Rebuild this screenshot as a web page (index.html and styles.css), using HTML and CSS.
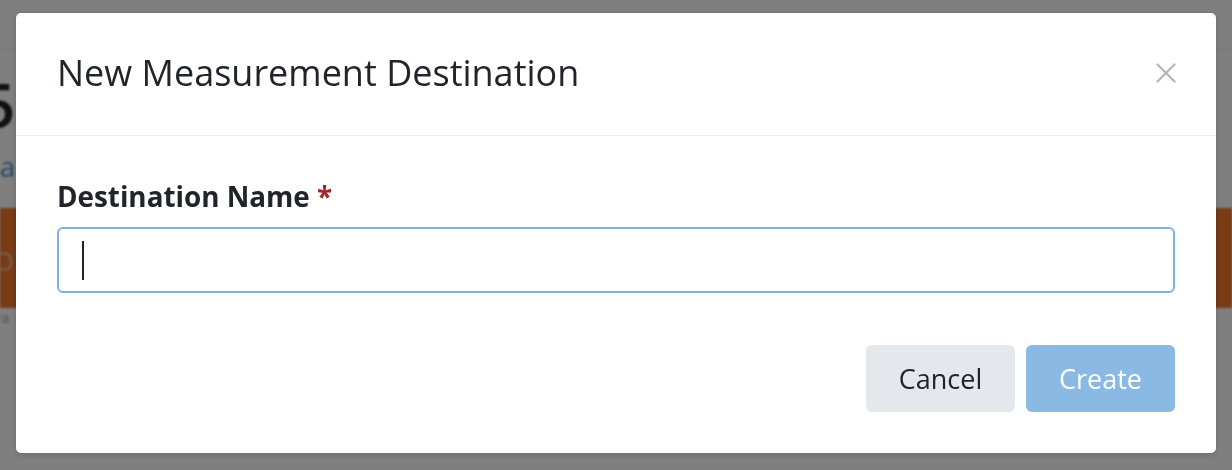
FILE: index.html
```html
<!DOCTYPE html>
<html lang="en">
<head>
<meta charset="utf-8">
<title>New Measurement Destination</title>
<link rel="stylesheet" href="styles.css">
</head>
<body>
<div class="page">
  <div class="nav"></div>
  <div class="content">
    <div class="big">5</div>
    <div class="link">ea</div>
  </div>
  <div class="band"><span class="band-text">o</span></div>
  <div class="small">ra</div>
</div>
<div class="overlay">
  <div class="modal">
    <div class="modal-header">
      <h5 class="modal-title">New Measurement Destination</h5>
      <button class="close" type="button" aria-label="Close">
        <svg width="20" height="20" viewBox="0 0 20 20"><path d="M1.5 1.5 L18.5 18.5 M18.5 1.5 L1.5 18.5" stroke="#b2b8bd" stroke-width="2.3" stroke-linecap="round" fill="none"/></svg>
      </button>
    </div>
    <div class="modal-body">
      <label class="label">Destination Name <span class="req">*</span></label>
      <div class="field">
        <div class="input"><span class="caret"></span></div>
      </div>
    </div>
    <div class="modal-footer">
      <button class="btn btn-cancel" type="button">Cancel</button>
      <button class="btn btn-create" type="button">Create</button>
    </div>
  </div>
</div>
</body>
</html>
```
FILE: styles.css
```css
* { box-sizing: border-box; }
html, body { margin: 0; padding: 0; }
body {
  width: 1232px;
  height: 470px;
  overflow: hidden;
  font-family: "Open Sans", "Noto Sans", sans-serif;
  background: #fff;
}
.page {
  filter: blur(1px);
}
.nav {
  height: 50px;
  border-bottom: 1px solid #e6e6e6;
  background: #fff;
}
.content {
  height: 158px;
  padding-top: 22px;
}
.big {
  font-size: 62px;
  font-weight: 600;
  line-height: 64px;
  color: #222;
  margin-left: -20px;
}
.link {
  font-size: 28px;
  line-height: 36px;
  color: #4a8fd0;
  margin-left: -16px;
  margin-top: 12px;
}
.band {
  height: 100px;
  background: #f0762a;
  display: flex;
  align-items: center;
}
.band-text {
  font-size: 34px;
  color: #f6b58a;
  margin-left: -6px;
}
.small {
  font-size: 14px;
  color: #9aa;
  margin-left: -4px;
}
.overlay {
  position: fixed;
  inset: 0;
  background: rgba(0, 0, 0, 0.5);
  padding: 13px 16px 0 16px;
}
.modal {
  width: 1200px;
  height: 440px;
  background: #fff;
  border-radius: 5px;
  box-shadow: 0 2px 6px rgba(0, 0, 0, 0.15);
  display: flex;
  flex-direction: column;
}
.modal-header {
  display: flex;
  align-items: center;
  justify-content: space-between;
  padding: 39px 40px 41px 41px;
  border-bottom: 1px solid #eeeeee;
}
.modal-title {
  margin: 0;
  font-size: 36px;
  font-weight: 400;
  line-height: 42px;
  color: #212529;
}
.close {
  border: 0;
  background: none;
  padding: 0;
  width: 20px;
  height: 20px;
  display: block;
}
.close svg { display: block; }
.modal-body {
  padding: 40px 41px 0 41px;
}
.label {
  display: block;
  font-size: 27.8px;
  font-weight: 700;
  line-height: 40px;
  color: #212529;
}
.req {
  color: #a5262a;
}
.field {
  margin-top: 11px;
  position: relative;
}
.input {
  height: 66px;
  border: 2px solid #80b2e8;
  border-radius: 6px;
  background: #fff;
  position: relative;
}
.caret {
  position: absolute;
  left: 23px;
  top: 12px;
  width: 2px;
  height: 39px;
  background: #222;
}
.modal-footer {
  display: flex;
  justify-content: flex-end;
  gap: 11px;
  padding: 52px 41px 0 41px;
}
.btn {
  width: 149px;
  height: 67px;
  border: 0;
  border-radius: 6px;
  font-family: "Open Sans", "Noto Sans", sans-serif;
  font-size: 27px;
  line-height: 1;
  padding: 0;
}
.btn-cancel {
  background: #e4e7eb;
  color: #212529;
}
.btn-create {
  background: #8ab9e4;
  color: #fff;
}
```
